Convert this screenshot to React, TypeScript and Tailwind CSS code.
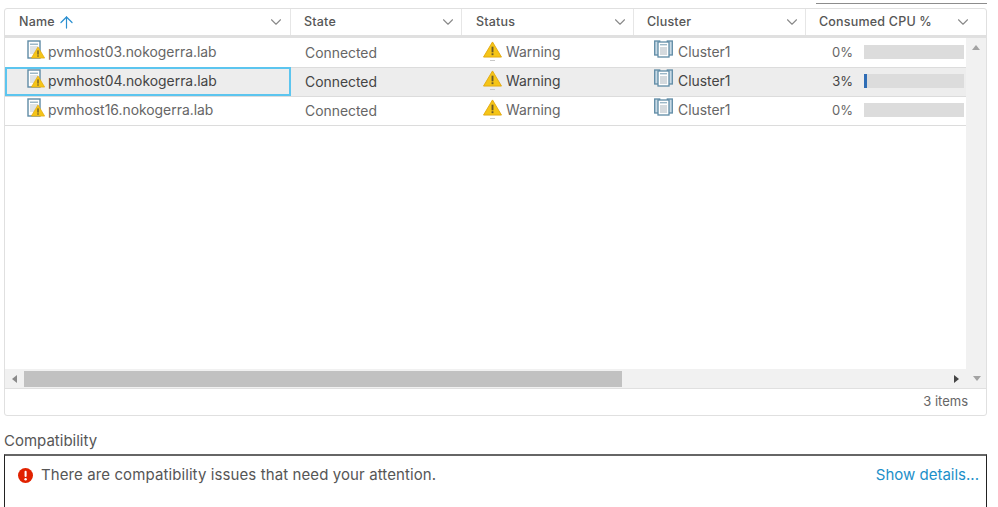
import { ChevronDown, ArrowUp } from 'lucide-react';

const columns = [
  { label: 'Name', width: 'w-[286px]', pad: 'pl-[14px] pr-[5px]' },
  { label: 'State', width: 'w-[171px]', pad: 'pl-[13px] pr-[4px]' },
  { label: 'Status', width: 'w-[172px]', pad: 'pl-[14px] pr-[4px]' },
  { label: 'Cluster', width: 'w-[172px]', pad: 'pl-[13px] pr-[4px]' },
  { label: 'Consumed CPU %', width: 'w-[182px]', pad: 'pl-[13px] pr-[15px]' },
];

const hosts = [
  { name: 'pvmhost03.nokogerra.lab', cpu: 0 },
  { name: 'pvmhost04.nokogerra.lab', cpu: 3 },
  { name: 'pvmhost16.nokogerra.lab', cpu: 0 },
];

function WarnTriangle({ className }: { className: string }) {
  return (
    <svg viewBox="0 0 20 18" className={className}>
      <path d="M10 1 L19.5 17 L0.5 17 Z" fill="#f5c518" stroke="#e3a90f" strokeWidth="1" strokeLinejoin="round" />
      <rect x="9" y="6" width="2" height="6" fill="#6b5a2a" />
      <rect x="9" y="13" width="2" height="2" fill="#6b5a2a" />
    </svg>
  );
}

function HostIcon() {
  return (
    <div className="relative w-[20px] h-[20px] shrink-0">
      <svg viewBox="0 0 20 20" className="w-[20px] h-[20px]">
        <rect x="1" y="1" width="12" height="17" fill="#fff" stroke="#5f8ba5" strokeWidth="1.4" />
        <rect x="3" y="3.5" width="8" height="1.5" fill="#9db8c8" />
        <rect x="3" y="6" width="8" height="8" fill="#dfe3e6" />
      </svg>
      <WarnTriangle className="absolute left-[4px] top-[6px] w-[14px] h-[13px]" />
    </div>
  );
}

function ClusterIcon() {
  return (
    <svg viewBox="0 0 19 18" className="w-[19px] h-[18px] shrink-0">
      <rect x="0.7" y="1" width="5" height="14" fill="#c9dbe6" stroke="#5f8ba5" strokeWidth="1.3" />
      <rect x="13.3" y="1" width="5" height="14" fill="#c9dbe6" stroke="#5f8ba5" strokeWidth="1.3" />
      <rect x="4" y="2" width="11" height="15" fill="#fff" stroke="#5f8ba5" strokeWidth="1.3" />
      <rect x="6" y="4" width="7" height="1.4" fill="#9db8c8" />
      <rect x="6" y="7" width="7" height="8" fill="#d5dade" />
    </svg>
  );
}

function Row({ name, cpu, selected }: { name: string; cpu: number; selected: boolean }) {
  const text = selected ? 'text-[#444]' : 'text-[#666]';
  return (
    <div className={`relative flex h-[29px] border-b border-[#dcdcdc] text-[13.9px] ${selected ? 'bg-[#ededed]' : 'bg-white'} ${text}`}>
      {selected && <div className="absolute left-0 top-[-1px] w-[286px] h-[29px] border-2 border-[#5cc5ef]" />}
      <div className="w-[285px] shrink-0 flex items-start pl-[22px] pt-[1px] gap-[1px]">
        <HostIcon />
        <span className="mt-[2px] leading-[20px]">{name}</span>
      </div>
      <div className="w-[171px] shrink-0 pl-[15px] pt-[4px] leading-[20px]">Connected</div>
      <div className="w-[172px] shrink-0 flex items-start pl-[22px] pt-[2px]">
        <div className="relative shrink-0">
          <WarnTriangle className="w-[19px] h-[17px]" />
          <div className="absolute left-[7px] top-[19px] w-[5px] h-[1px] bg-[#c8c8c8]" />
        </div>
        <span className="ml-[4px] mt-[1px] leading-[20px]">Warning</span>
      </div>
      <div className="w-[172px] shrink-0 flex items-start pl-[21px] pt-[1px]">
        <ClusterIcon />
        <span className="ml-[5px] mt-[2px] leading-[20px]">Cluster1</span>
      </div>
      <div className="flex-1 flex items-start pt-[3px]">
        <span className="w-[48px] text-right text-[13px] leading-[20px]">{cpu}%</span>
        <div className="ml-[11px] mt-[3px] w-[100px] h-[14px] bg-[#dcdcdc]">
          <div className="h-full bg-[#2f6db5]" style={{ width: `${cpu}%` }} />
        </div>
      </div>
    </div>
  );
}

export default function App() {
  return (
    <div className="relative w-[998px] h-[507px] overflow-hidden bg-white pt-[8px] pl-[4px] font-['Inter',sans-serif]">
      <div className="absolute right-[11px] top-[3px] w-[171px] h-[1px] bg-[#8c8c8c]" />

      {/* Hosts grid */}
      <div className="w-[983px] h-[408px] flex flex-col border border-[#e0e0e0] rounded-[3px] overflow-hidden">
        <div className="flex h-[29px] shrink-0 border-b-[3px] border-[#e0e0e0] overflow-hidden">
          {columns.map((col) => (
            <div key={col.label} className={`${col.width} ${col.pad} shrink-0 flex items-center justify-between border-r border-[#e6e6e6] text-[12.5px] font-medium tracking-[0.2px] text-[#565656]`}>
              <span className="flex items-center gap-[2px]">
                {col.label}
                {col.label === 'Name' && <ArrowUp size={19} className="text-[#2a8fd0]" strokeWidth={1.5} />}
              </span>
              <ChevronDown size={18} className="text-[#8a8a8a]" strokeWidth={1.5} />
            </div>
          ))}
        </div>

        <div className="flex flex-1 min-h-0">
          <div className="flex-1 overflow-hidden pt-[1px]">
            {hosts.map((host, i) => (
              <Row key={host.name} name={host.name} cpu={host.cpu} selected={i === 1} />
            ))}
          </div>
          <div className="w-[20px] shrink-0 bg-[#f1f1f1] flex justify-center pt-[7px]">
            <div className="w-0 h-0 border-x-[4px] border-x-transparent border-b-[5px] border-b-[#a3a3a3]" />
          </div>
        </div>

        {/* Horizontal scrollbar */}
        <div className="h-[20px] shrink-0 bg-[#f1f1f1] flex items-center border-b border-[#e0e0e0]">
          <div className="w-[19px] flex justify-center">
            <div className="w-0 h-0 border-y-[4px] border-y-transparent border-r-[5px] border-r-[#8a8a8a]" />
          </div>
          <div className="w-[598px] h-[16px] bg-[#c1c1c1]" />
          <div className="ml-[332px] w-0 h-0 border-y-[4px] border-y-transparent border-l-[5px] border-l-[#444]" />
          <div className="ml-[14px] w-0 h-0 border-x-[4px] border-x-transparent border-t-[5px] border-t-[#a3a3a3]" />
        </div>

        <div className="h-[26px] shrink-0 flex items-center justify-end pr-[18px] text-[13px] text-[#666]">3 items</div>
      </div>

      {/* Compatibility */}
      <div className="mt-[16px] text-[15px] leading-[18px] text-[#565656]">Compatibility</div>
      <div className="mt-[4px] w-[983px] h-[60px] border border-[#222] border-t-2 border-t-[#666] flex items-start justify-between pl-[13px] pr-[7px] pt-[9px]">
        <div className="flex items-center gap-[8px] text-[15px] tracking-[0.1px] leading-[20px] text-[#565656]">
          <svg viewBox="0 0 16 16" className="w-[15px] h-[15px] shrink-0 mt-[1px]">
            <circle cx="8" cy="8" r="8" fill="#e12200" />
            <rect x="7" y="3" width="2.2" height="6.5" rx="1" fill="#fff" />
            <circle cx="8.1" cy="12" r="1.3" fill="#fff" />
          </svg>
          There are compatibility issues that need your attention.
        </div>
        <span className="text-[15px] leading-[20px] text-[#1d8fc9]">Show details...</span>
      </div>
    </div>
  );
}
